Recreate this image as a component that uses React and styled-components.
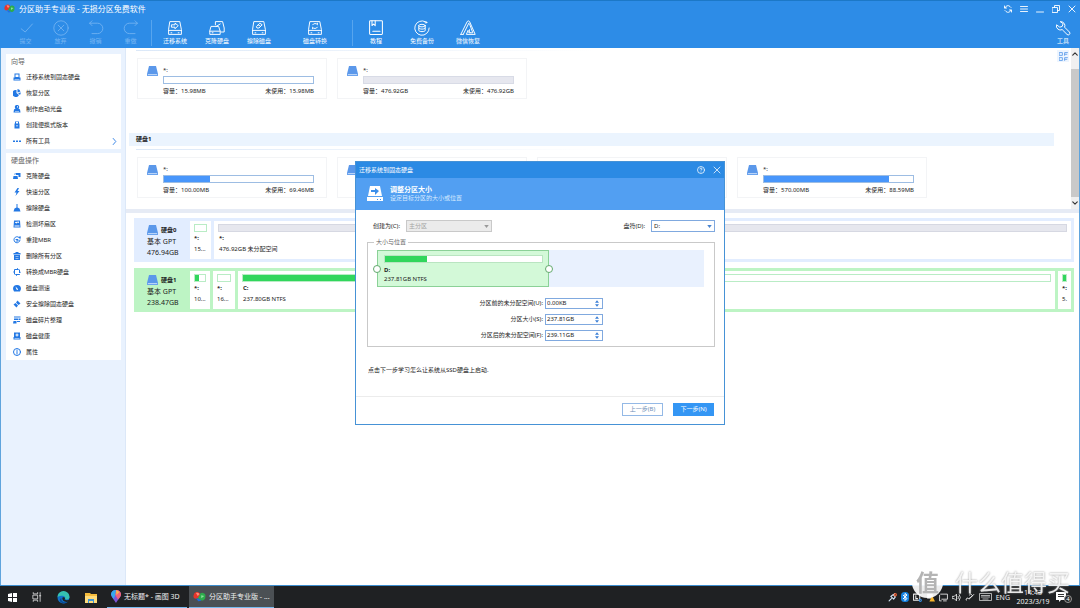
import React from 'react';
import styled, { createGlobalStyle } from 'styled-components';

const GlobalStyle = createGlobalStyle`
  *, *::before, *::after { box-sizing: border-box; }
  body {
    margin: 0;
    background: #fff;
    color: #1c1c1c;
    font-family: "Noto Sans", "Noto Sans CJK SC", sans-serif;
    font-size: 6px;
    line-height: 9px;
  }
  button, input, select { font: inherit; color: inherit; }
  button { border: 0; padding: 0; background: none; }
  svg { display: block; flex: none; }
  h1, h2, h3, p, ul, dl, dd, dt { margin: 0; padding: 0; font: inherit; list-style: none; }
`;

/* ---------- icons ---------- */

const Line = ({ s = 16, v = 16, w = 1, children }) => (
  <svg width={s} height={s} viewBox={`0 0 ${v} ${v}`} fill="none" stroke="currentColor"
    strokeWidth={w} strokeLinecap="round" strokeLinejoin="round" aria-hidden="true">{children}</svg>
);
const Solid = ({ children }) => (
  <svg width="8" height="8" viewBox="0 0 16 16" fill="currentColor" aria-hidden="true">{children}</svg>
);

const DriveIcon = () => (
  <svg width="11" height="10" viewBox="0 0 11 10" aria-hidden="true">
    <path d="M2 0h7l2 8H0z" fill="#5b98ea" />
    <path d="M0 8h11v2H0z" fill="#6ba3ee" />
    <path d="M1 8h9v1H1z" fill="#b9d4f8" />
  </svg>
);

const LogoIcon = ({ s = 11 }) => (
  <svg width={s} height={s} viewBox="0 0 22 20" aria-hidden="true">
    <path d="M1 8a6 6 0 0 1 11-3l3 4-6 4-5 1a5 5 0 0 1-3-6z" fill="#e5352b" />
    <path d="M5 4a5 5 0 0 1 6 2L8 9z" fill="#ff8d7a" />
    <path d="M11 8a5 5 0 0 1 10 2 6 6 0 0 1-9 6l-4-3z" fill="#2dac4c" />
    <path d="M14 8l5 1-5 4z" fill="#8be39a" />
    <path d="M5 13l5 1 4 3-5 1z" fill="#1f6ee0" />
  </svg>
);

const diskBody = <><path d="M4 2h12l2 10v6H2v-6z" /><path d="M2 13h16M5 16h1M14 16h1" /></>;

const tools = {
  commit: <Line v={20}><path d="M4 11l5 4L18 5" /></Line>,
  discard: <Line v={20}><circle cx="10" cy="10" r="9" /><path d="M6.500 6.500l7 7M13.500 6.500l-7 7" /></Line>,
  undo: <Line v={20}><path d="M5 1L2 4l3 3M2 4h10a6 6 0 0 1 0 13H5" /></Line>,
  redo: <Line v={20}><path d="M15 1l3 3-3 3M18 4H8a6 6 0 0 0 0 13h7" /></Line>,
  migrate: <Line v={20} w={1.2}>{diskBody}<path d="M6 6h4V4l4 3-4 4V9H6z" /></Line>,
  clone: <Line v={20} w={1.2}><path d="M8 6V2h9l2 8v5h-4M3 8h9l2 6v4H1v-4zM1 14h13M4 16h1M9 8l5-3" /></Line>,
  wipe: <Line v={20} w={1.2}>{diskBody}<path d="M7 8l4-4 3 2-4 4H8zM9 6l3 2" /></Line>,
  convert: <Line v={20} w={1.2}>{diskBody}<path d="M7 6a3.500 3.500 0 0 1 6 0v-2M13 9a3.500 3.500 0 0 1-6 0v2" /></Line>,
  tutorial: <Line v={20} w={1.3}><rect x="2" y="1" width="16" height="17" rx="1" /><path d="M5 1v6l2-2 2 2V1M6 14h9" /></Line>,
  backup: <Line v={20} w={1.2}><path d="M14 2a9 9 0 1 0 5 8" /><circle cx="15" cy="3" r="1" /><ellipse cx="10" cy="7" rx="4" ry="1.600" /><path d="M6 7v6c0 2 8 2 8 0V7M6 10c0 2 8 2 8 0" /></Line>,
  wechat: <Line v={20} w={1.2}><path d="M1 18L9 2q1-2 3 0l7 16H8l2-5 3 3M4 18l7-14M12 5l4 11h-5l1-4M1 18h3" /></Line>,
  wrench: <Line v={20} w={1.2}><path d="M7 2a5 5 0 0 1 5 7l6 6a2 2 0 0 1-3 3l-6-6a5 5 0 0 1-7-6l4 3 3-1 1-3z" /></Line>,
};

const sideIcons = {
  migrate: <Solid><path fillRule="evenodd" d="M3 1h10v8h2v6H1V9h2zm2 2v5h6V3zM3 12h10v1H3z" /></Solid>,
  recover: <Solid><path d="M7 2v6l5 4A7 7 0 1 1 7 2zM9 0a7 7 0 0 1 6 5l-6 2zM10 8l6-1-2 5z" /></Solid>,
  boot: <Solid><path fillRule="evenodd" d="M8 0a4 4 0 0 1 3 7l3 2 1 6H1l1-6 3-2a4 4 0 0 1 3-7zm0 2v3h2V3zM4 12v1h8v-1z" /></Solid>,
  portable: <Solid><path fillRule="evenodd" d="M4 1h8v4h1v10H3V5h1zm2 1v3h4V2zm1 6v3h2V8z" /></Solid>,
  more: <Solid><path d="M0 7h4v3H0zM6 7h4v3H6zM12 7h4v3h-4z" /></Solid>,
  clone: <Solid><path d="M6 2h9v8h-4V6H6zM1 8h8l1 6H0zM7 3l-4 3v-3z" /></Solid>,
  quick: <Solid><path d="M9 0L3 9h4l-2 7 8-10H9l3-6z" /></Solid>,
  wipe: <Solid><path d="M7 0h2v7l4 2 2 6H1l2-6 4-2z" /></Solid>,
  scan: <Solid><path fillRule="evenodd" d="M2 1h12l1 14H1zm2 3v1l3 2 2-2 3 1V3zM3 11v2h10v-2z" /></Solid>,
  rebuild: <Line s={8} w={2}><path d="M14 8a6 6 0 1 1-2-5h2M14 1v4M6 7h4v3H7" /></Line>,
  remove: <Solid><path fillRule="evenodd" d="M5 0h6v2h4v3H1V2h4zM2 6h12v10H2zm3 3v1h6V9zM5 12v1h6v-1z" /></Solid>,
  change: <Line s={8} w={2}><path d="M3 6V3h8l-2-2M13 4v6l2-2M13 13H5l2 2M3 12V6L1 8" /></Line>,
  speed: <Solid><path fillRule="evenodd" d="M8 2a8 8 0 0 1 8 8l-2 5H2l-2-5a8 8 0 0 1 8-8zM5 5l2 6 3 1 0-2z" /></Solid>,
  secure: <Solid><path d="M9 1l6 6-4 3-5-5zM5 6l5 5-3 4-6-6z" /></Solid>,
  defrag: <Solid><path d="M2 1h13v2H2zM2 5h8v3H2zM11 5h4v3h-4zM1 10h6v5H0zM8 10h6v2H8z" /></Solid>,
  health: <Solid><path fillRule="evenodd" d="M2 1h12v9h1v5H1v-5h1zm5 2v2H5v2h2v2h2V7h2V5H9V3zM3 12v1h10v-1z" /></Solid>,
  info: <Line s={8} w={2}><circle cx="8" cy="8" r="7" /><path d="M8 7v5M8 4v1" /></Line>,
};

/* ---------- window frame ---------- */

const Desktop = styled.div`
  min-height: 100vh;
  display: flex;
  flex-direction: column;
`;
const Window = styled.div`
  flex: 1;
  display: flex;
  flex-direction: column;
  border-bottom: 1px solid #3d8ecf;
`;
const Header = styled.header`
  background: #2d8ce7;
  border-top: 1px solid #1c78c7;
  color: #fff;
`;
const TitleBar = styled.div`
  display: flex;
  align-items: center;
  height: 15px;
  padding: 0 4px;
  gap: 4px;
`;
const AppTitle = styled.h1`
  flex: 1;
  font-size: 8px;
  line-height: 14px;
`;
const WindowControls = styled.div`
  display: flex;
  gap: 8px;
`;
const IconButton = styled.button`
  display: grid;
  place-items: center;
  width: 8px;
  height: 12px;
  color: inherit;
`;
const Toolbar = styled.nav`
  display: flex;
  align-items: center;
  height: 32px;
  padding-top: 2px;
`;
const ToolGroup = styled.div`
  display: flex;
  padding: 0 ${p => p.$end}px 0 ${p => p.$start}px;
  border-right: ${p => (p.$last ? 0 : 1)}px solid #57a5ee;
  margin-right: ${p => (p.$last ? 'auto' : 0)};
`;
const ToolButton = styled.button`
  display: flex;
  flex-direction: column;
  align-items: center;
  gap: 1px;
  width: ${p => p.$w}px;
  margin-left: ${p => (p.$apart ? 14 : 0)}px;
  color: ${p => (p.disabled ? '#79b6f2' : '#fff')};
  white-space: nowrap;
`;
const Body = styled.div`
  flex: 1;
  display: flex;
  border: solid #5fa4dd;
  border-width: 0 1px;
`;

/* ---------- sidebar ---------- */

const Sidebar = styled.aside`
  width: 125px;
  padding: 6px 4px 6px 5px;
  display: flex;
  flex-direction: column;
  gap: 4px;
  background: #e9f2fe;
  border-right: 1px solid #dce8f8;
`;
const SidePanel = styled.section`background: #fff;`;
const SideHeading = styled.h2`
  padding-left: 5px;
  color: #666;
  font-size: 7px;
  line-height: 15px;
`;
const SideItem = styled.button`
  display: flex;
  align-items: center;
  width: 100%;
  height: 16px;
  padding: 0 3px 0 7px;
  gap: 5px;
  color: #2378e4;
`;
const SideLabel = styled.span`
  flex: 1;
  text-align: left;
  color: #1c1c1c;
`;

/* ---------- partition cards ---------- */

const Main = styled.main`
  flex: 1;
  min-width: 0;
`;
const UpperPane = styled.div`
  display: flex;
  border-bottom: 4px solid #e6ebf5;
`;
const CardArea = styled.div`
  flex: 1;
  padding: 0 17px 11px 3px;
`;
const DiskBand = styled.h2`
  margin: 34px 0 3px;
  padding-left: 7px;
  background: #ebf4fe;
  font-weight: 700;
  line-height: 13px;
`;
const Rule = styled.div`
  height: 1px;
  margin: ${p => (p.$first ? 2 : 0)}px 0 7px 7px;
  background: linear-gradient(90deg, #dbe8f8, #fff 50%);
`;
const CardGrid = styled.div`
  display: grid;
  grid-template-columns: repeat(auto-fill, 190px);
  gap: 10px;
  padding-left: 8px;
`;
const Card = styled.article`
  display: flex;
  gap: 5px;
  padding: 7px 12px 2px 9px;
  border: 1px solid #f3f4f6;
`;
const CardContent = styled.div`flex: 1;`;
const Meter = styled.div`
  height: 8px;
  margin: 1px 0 3px;
  border: 1px solid ${p => (p.$free ? '#d8dbe6' : '#9dbde3')};
  background: ${p => (p.$free ? '#e6e7ef' : '#fff')};
`;
const Fill = styled.div`
  height: 100%;
  background: ${p => p.$color};
`;
const Stats = styled.div`
  display: flex;
  justify-content: space-between;
`;
const ViewSwitch = styled.button`
  display: grid;
  place-items: center;
  width: 12px;
  height: 12px;
  margin: 2px 2px 0 -14px;
  background: #edf5ff;
  color: #5b9bea;
`;
const ScrollBar = styled.div`
  display: flex;
  flex-direction: column;
  width: 8px;
  background: #f0f0f0;
  color: #333;
`;
const Thumb = styled.div`
  flex: 1;
  margin-top: 9px;
  background: #c9c9c9;
`;

/* ---------- disk map ---------- */

const DiskMap = styled.div`
  display: flex;
  flex-direction: column;
  gap: 6px;
  padding: 5px 5px 5px 8px;
`;
const DiskRow = styled.section`
  display: flex;
  gap: 3px;
  padding: 3px;
  background: ${p => (p.$active ? '#bdf4c4' : '#e2edff')};
`;
const DiskInfo = styled.div`
  width: 50px;
  padding: 3px 0 0 10px;
  font-size: 7px;
  line-height: 11px;
  white-space: nowrap;
`;
const DiskName = styled.h3`
  display: flex;
  align-items: center;
  gap: 3px;
  height: 12px;
  font-size: 6px;
  font-weight: 700;
`;
const Block = styled.div`
  flex: ${p => (p.$w ? `0 0 ${p.$w}px` : 1)};
  min-width: 0;
  padding: 3px 3px 4px;
  overflow: hidden;
  background: #fff;
  line-height: 11px;
  white-space: nowrap;
`;
const MapBar = styled.div`
  height: 8px;
  margin: 0 1px 1px;
  border: 1px solid ${p => (p.$free ? '#d6d8e2' : '#b9ecc5')};
  background: ${p => (p.$free ? '#e6e7ee' : '#fff')};
`;
const BlockText = styled.p`
  padding-left: ${p => (p.$tight ? 1 : 2)}px;
  font-weight: ${p => (p.$bold ? 700 : 400)};
`;

/* ---------- dialog ---------- */

const Overlay = styled.div`
  position: fixed;
  inset: 0 0 22px;
  display: grid;
  place-items: center;
`;
const Dialog = styled.section`
  width: 370px;
  border: 1px solid #4692d6;
  background: #fff;
`;
const DialogTitle = styled.header`
  display: flex;
  align-items: center;
  gap: 8px;
  height: 16px;
  padding: 0 3px;
  background: #2b8ae4;
  color: #fff;
`;
const DialogName = styled.h2`flex: 1;`;
const Banner = styled.div`
  display: flex;
  align-items: center;
  gap: 7px;
  height: 32px;
  padding-left: 11px;
  background: #529ff2;
  color: #d9ebff;
`;
const BannerTitle = styled.h3`
  color: #fff;
  font-size: 7px;
  font-weight: 700;
`;
const DialogBody = styled.div`padding: 10px 9px 21px 11px;`;
const FieldRow = styled.div`
  display: flex;
  justify-content: space-between;
  padding-left: 6px;
`;
const Field = styled.div`
  display: flex;
  align-items: center;
  gap: 6px;
`;
const SelectBox = styled.div`
  display: grid;
  align-items: center;
  width: ${p => p.$w}px;
  height: 12px;
  border: 1px solid ${p => (p.$off ? '#c9c9c9' : '#80a9df')};
  background: ${p => (p.$off ? '#ebebeb' : '#fff')};
  color: ${p => (p.$off ? '#999' : '#4a84cf')};
  & > * { grid-area: 1 / 1; }
  & > svg { justify-self: end; margin-right: 2px; }
`;
const Select = styled.select`
  width: 100%;
  height: 10px;
  padding: 0 2px;
  border: 0;
  appearance: none;
  background: transparent;
  color: ${p => (p.disabled ? '#a3a3a3' : '#222')};
  opacity: 1;
`;
const SizeBox = styled.fieldset`
  margin: 6px 0 0;
  padding: 3px 10px 5px 9px;
  border: 1px solid #c9c9c9;
  & > legend { padding: 0 2px; margin-left: -3px; color: #666; }
`;
const Allocation = styled.div`
  display: flex;
  height: 37px;
  background: #e9f1fe;
`;
const Partition = styled.div`
  position: relative;
  width: 172px;
  padding: 4px 5px 0 6px;
  border: 1px solid #8bd197;
  background: #d3f9d8;
`;
const PartitionBar = styled.div`
  height: 8px;
  margin-bottom: 3px;
  border: 1px solid #b9e5c1;
  background: #fff;
`;
const Handle = styled.span`
  position: absolute;
  top: 14px;
  ${p => p.$side}: -5px;
  width: 8px;
  height: 8px;
  border: 1px solid #62a96d;
  border-radius: 50%;
  background: #fff;
`;
const SpinList = styled.div`
  display: grid;
  grid-template-columns: 166px 58px;
  gap: 5px 2px;
  margin-top: 11px;
  text-align: right;
  line-height: 11px;
`;
const SpinBox = styled.div`
  display: flex;
  height: 11px;
  border: 1px solid #80a9df;
`;
const SpinInput = styled.input`
  flex: 1;
  min-width: 0;
  padding: 0 1px;
  border: 0;
  background: none;
`;
const SpinArrows = styled.div`
  display: grid;
  grid-template-rows: 4px 4px;
  width: 10px;
  color: #3b7fd6;
`;
const SpinArrow = styled.button`
  display: grid;
  place-items: center;
  color: inherit;
`;
const PartitionName = styled.p`font-weight: 700;`;
const Hint = styled.p`
  margin-top: 19px;
  padding-left: 1px;
`;
const DialogFooter = styled.footer`
  display: flex;
  justify-content: flex-end;
  gap: 10px;
  padding: 6px 10px 8px;
  border-top: 1px solid #ececec;
`;
const ActionButton = styled.button`
  width: 41px;
  height: 13px;
  border: 1px solid ${p => (p.$primary ? '#3496f4' : '#94b9e6')};
  background: ${p => (p.$primary ? '#3496f4' : '#fff')};
  color: ${p => (p.$primary ? '#fff' : '#6f8fb8')};
`;

/* ---------- taskbar ---------- */

const Taskbar = styled.footer`
  display: flex;
  height: 22px;
  padding: 0 6px 0 8px;
  background: #1f2123;
  color: #f0f0f0;
`;
const Shortcuts = styled.div`
  display: flex;
  align-items: center;
  gap: 15px;
  width: 99px;
`;
const TaskApp = styled.button`
  display: flex;
  align-items: center;
  gap: 3px;
  width: ${p => (p.$active ? 85 : 80)}px;
  margin-right: 2px;
  padding-left: 4px;
  border-bottom: 1px solid #76b9ed;
  background: ${p => (p.$active ? '#4b5054' : 'transparent')};
  color: #f0f0f0;
  font-size: 7px;
  white-space: nowrap;
`;
const Tray = styled.div`
  display: flex;
  align-items: center;
  gap: 4px;
  margin-left: auto;
  font-size: 7px;
`;
const Clock = styled.time`
  width: 38px;
  text-align: center;
`;
const Notice = styled.button`
  position: relative;
  width: 18px;
  color: #fff;
`;
const Count = styled.span`
  position: absolute;
  left: 8px;
  top: 3px;
  width: 8px;
  height: 8px;
  border-radius: 50%;
  border: 1px solid #999;
  background: #222;
  font-size: 6px;
  line-height: 6px;
`;
const Watermark = styled.div`
  position: fixed;
  right: 10px;
  bottom: 10px;
  display: flex;
  align-items: center;
  gap: 12px;
  color: rgba(255, 255, 255, 0.85);
  font-size: 23px;
  line-height: 31px;
  text-shadow: 0 0 2px #8d8d8d;
  pointer-events: none;
`;
const Seal = styled.span`
  width: 31px;
  height: 31px;
  border-radius: 50%;
  background: rgba(255, 255, 255, 0.92);
  color: #b4b4b4;
  font-weight: 700;
  text-align: center;
  text-shadow: none;
`;

/* ---------- data ---------- */

const editTools = [['commit', '提交'], ['discard', '放弃'], ['undo', '撤销'], ['redo', '重做']];
const diskTools = [['migrate', '迁移系统'], ['clone', '克隆硬盘'], ['wipe', '擦除磁盘'], ['convert', '磁盘转换', true]];
const helpTools = [['tutorial', '教程'], ['backup', '免费备份'], ['wechat', '微信恢复']];

const wizards = [['migrate', '迁移系统到固态硬盘'], ['recover', '恢复分区'], ['boot', '制作启动光盘'],
  ['portable', '创建便携式版本'], ['more', '所有工具']];
const operations = [['clone', '克隆硬盘'], ['quick', '快速分区'], ['wipe', '擦除硬盘'], ['scan', '检测坏扇区'],
  ['rebuild', '重建MBR'], ['remove', '删除所有分区'], ['change', '转换成MBR硬盘'], ['speed', '磁盘测速'],
  ['secure', '安全擦除固态硬盘'], ['defrag', '磁盘碎片整理'], ['health', '磁盘健康'], ['info', '属性']];

const disk0 = [
  { id: 'reserved', size: '15.98MB', unused: '15.98MB', used: 0 },
  { id: 'free', size: '476.92GB', unused: '476.92GB', used: 0, free: true },
];
const disk1 = [
  { id: 'efi', size: '100.00MB', unused: '69.46MB', used: 31 },
  { id: 'msr', covered: true },
  { id: 'system', covered: true },
  { id: 'recovery', size: '570.00MB', unused: '88.59MB', used: 84 },
];

const spinFields = [
  ['before', '分区前的未分配空间(U):', '0.00KB'],
  ['size', '分区大小(S):', '237.81GB'],
  ['after', '分区后的未分配空间(F):', '239.11GB'],
];

/* ---------- parts ---------- */

const Triangle = ({ up, w = 5, h = 3 }) => (
  <svg width={w} height={h} viewBox="0 0 6 4" fill="currentColor" aria-hidden="true">
    <path d={up ? 'M0 4h6L3 0z' : 'M0 0h6L3 4z'} />
  </svg>
);

const Tools = ({ items, w, disabled }) => items.map(([icon, label, apart]) => (
  <ToolButton key={icon} $w={w} $apart={apart} disabled={disabled}>{tools[icon]}{label}</ToolButton>
));

const SideList = ({ title, items }) => (
  <SidePanel>
    <SideHeading>{title}</SideHeading>
    <ul>
      {items.map(([icon, label]) => (
        <li key={icon}>
          <SideItem>
            {sideIcons[icon]}
            <SideLabel>{label}</SideLabel>
            {icon === 'more' && <Line s={7} w={2}><path d="M5 1l6 7-6 7" /></Line>}
          </SideItem>
        </li>
      ))}
    </ul>
  </SidePanel>
);

const PartitionCard = ({ size, unused, used, free, covered }) => (
  <Card>
    <DriveIcon />
    {!covered && (
      <CardContent>
        <h3>*:</h3>
        <Meter $free={free}><Fill $color="#4896fb" style={{ width: `${used}%` }} /></Meter>
        <Stats><span>容量：{size}</span><span>未使用：{unused}</span></Stats>
      </CardContent>
    )}
  </Card>
);

const MapBlock = ({ w, name = '*:', text, used = 0, free }) => (
  <Block $w={w}>
    <MapBar $free={free}><Fill $color="#31d65c" style={{ width: `${used}%` }} /></MapBar>
    <BlockText $bold $tight={Boolean(w)}>{name}</BlockText>
    <BlockText $tight={Boolean(w)}>{text}</BlockText>
  </Block>
);

const DiskSummary = ({ name, size }) => (
  <DiskInfo>
    <DiskName><DriveIcon />{name}</DiskName>
    <p>基本 GPT</p>
    <p>{size}</p>
  </DiskInfo>
);

const ResizeDialog = () => (
  <Overlay>
    <Dialog role="dialog" aria-labelledby="dialog-name">
      <DialogTitle>
        <DialogName id="dialog-name">迁移系统到固态硬盘</DialogName>
        <IconButton aria-label="帮助"><Line s={8} w={1.5}><circle cx="8" cy="8" r="7" /><path d="M6 6q0-2 2-2t2 2-2 3M8 12v0" /></Line></IconButton>
        <IconButton aria-label="关闭"><Line s={8} w={1.5}><path d="M2 2l12 12M14 2L2 14" /></Line></IconButton>
      </DialogTitle>
      <Banner>
        <svg width="16" height="16" viewBox="0 0 16 16" aria-hidden="true">
          <path d="M3 0h10l2 10H1zM0 11h16v4H0z" fill="#fff" />
          <path d="M4 4h4V2l4 3-4 4V6H4z" fill="#3b8feb" />
          <path d="M10 13h1v1h-1zM13 13h1v1h-1z" fill="#3b8feb" />
        </svg>
        <div>
          <BannerTitle>调整分区大小</BannerTitle>
          <p>设定目标分区的大小或位置</p>
        </div>
      </Banner>
      <DialogBody>
        <FieldRow>
          <Field>
            <label htmlFor="kind">创建为(C):</label>
            <SelectBox $w={86} $off>
              <Select id="kind" disabled><option>主分区</option></Select>
              <Triangle />
            </SelectBox>
          </Field>
          <Field>
            <label htmlFor="letter">盘符(D):</label>
            <SelectBox $w={64}>
              <Select id="letter"><option>D:</option></Select>
              <Triangle />
            </SelectBox>
          </Field>
        </FieldRow>
        <SizeBox>
          <legend>大小与位置</legend>
          <Allocation>
            <Partition>
              <PartitionBar><Fill $color="#31d65c" style={{ width: '27%' }} /></PartitionBar>
              <PartitionName>D:</PartitionName>
              <p>237.81GB NTFS</p>
              <Handle $side="left" />
              <Handle $side="right" />
            </Partition>
          </Allocation>
          <SpinList>
            {spinFields.map(([id, label, value]) => (
              <React.Fragment key={id}>
                <label htmlFor={id}>{label}</label>
                <SpinBox>
                  <SpinInput id={id} defaultValue={value} />
                  <SpinArrows>
                    <SpinArrow aria-label="增加"><Triangle up w={4} h={3} /></SpinArrow>
                    <SpinArrow aria-label="减少"><Triangle w={4} h={3} /></SpinArrow>
                  </SpinArrows>
                </SpinBox>
              </React.Fragment>
            ))}
          </SpinList>
        </SizeBox>
        <Hint>点击下一步学习怎么让系统从SSD硬盘上启动.</Hint>
      </DialogBody>
      <DialogFooter>
        <ActionButton>上一步(B)</ActionButton>
        <ActionButton $primary>下一步(N)</ActionButton>
      </DialogFooter>
    </Dialog>
  </Overlay>
);

const SystemTaskbar = () => (
  <Taskbar>
    <Shortcuts>
      <svg width="9" height="9" viewBox="0 0 9 9" fill="#fff" aria-hidden="true"><path d="M0 1l4-1v4H0zM5 0l4-0v4H5zM0 5h4v4L0 8zM5 5h4v4H5z" /></svg>
      <Line s={10} w={1.2}><path d="M2 1v2h7V1M2 15v-2h7v2M2 5h7v6H2zM13 1v14M12 6h2" /></Line>
      <svg width="13" height="13" viewBox="0 0 26 26" aria-hidden="true">
        <circle cx="13" cy="13" r="12" fill="#1272c9" />
        <path d="M1 12A12 12 0 0 1 25 12c0 5-6 6-9 4 3-5-6-9-15-4z" fill="#35c1b1" />
        <path d="M9 14c-2 6 5 11 13 7-4 5-13 5-16-1-1-3 0-5 3-6z" fill="#0c4a93" />
        <path d="M11 13c5-2 6 2 4 4 3 2 7 2 10 0v3c-6 4-16 1-14-7z" fill="#1f2123" />
      </svg>
      <svg width="12" height="11" viewBox="0 0 12 11" aria-hidden="true">
        <path d="M0 1h5l1 1h6v9H0z" fill="#f5bc3c" /><path d="M0 4h12v7H0z" fill="#ffdc7c" /><path d="M3 7h6v4H8V9H4v2H3z" fill="#3d95d8" />
      </svg>
    </Shortcuts>
    <TaskApp>
      <svg width="10" height="13" viewBox="0 0 20 26" aria-hidden="true">
        <path d="M10 0C4 0 0 4 0 9s7 11 10 17c3-6 10-12 10-17S16 0 10 0z" fill="#7d55d8" />
        <path d="M10 0c6 0 10 4 10 9 0 3-3 7-6 10L8 9z" fill="#f2647b" />
        <path d="M0 9c0-5 4-9 10-9L8 12l-3 6z" fill="#35a9ed" />
        <path d="M10 0l7 4-6 6z" fill="#f8b74d" />
      </svg>
      无标题* - 画图 3D
    </TaskApp>
    <TaskApp $active><LogoIcon s={13} />分区助手专业版 - ...</TaskApp>
    <Tray>
      <Line s={9} w={2}><path d="M2 14l4-4M5 6l5 5 3-4-4-4zM10 3l2-2" stroke="#d5e6f6" /><circle cx="13" cy="3" r="2" stroke="#ec6237" /></Line>
      <svg width="8" height="10" viewBox="0 0 16 20" aria-hidden="true"><rect width="16" height="20" rx="7" fill="#1683e2" /><path d="M4 6l8 7-4 4V3l4 3-8 8" fill="none" stroke="#fff" strokeWidth="2" /></svg>
      <Line s={9} w={1.8}><path d="M1 2h11v11H1zM5 5v5h3" /><circle cx="13" cy="13" r="2" stroke="#3590e8" /></Line>
      <svg width="9" height="9" viewBox="0 0 16 16" aria-hidden="true"><path d="M2 1h10v9H2z" fill="#ddd" /><path d="M11 5l5 10H6z" fill="#f9b62c" /></svg>
      <Line s={9} w={1.5}><path d="M3 2h12v9H5M1 4v10h3M8 14h5" /></Line>
      <Line s={9} w={1.5}><path d="M1 6h3l4-4v12l-4-4H1zM11 6q1 2 0 4M13 3q4 5 0 10" /></Line>
      <Line s={10} w={1.5}><path d="M2 13a2 2 0 0 1 4-2l3-3M7 5l2-2 3 3-5 5M10 8l4-4" /></Line>
      <svg width="13" height="8" viewBox="0 0 26 16" fill="none" stroke="#ddd" strokeWidth="1.5" aria-hidden="true"><path d="M1 1h24v14H1zM4 5h18M4 8h18M7 12h12" /></svg>
      <span>ENG</span>
      <Clock>14:43<br />2023/3/19</Clock>
      <Notice aria-label="通知"><svg width="10" height="10" viewBox="0 0 10 10" aria-hidden="true"><path d="M0 0h10v8H5L3 10V8H0z" fill="#fff" /><path d="M2 2h6v1H2zM2 4h6v1H2z" fill="#333" /></svg><Count>4</Count></Notice>
    </Tray>
  </Taskbar>
);

export default function App() {
  return (
    <Desktop>
      <GlobalStyle />
      <Window>
        <Header>
          <TitleBar>
            <LogoIcon />
            <AppTitle>分区助手专业版 - 无损分区免费软件</AppTitle>
            <WindowControls>
              <IconButton aria-label="刷新"><Line s={8} w={1.8}><path d="M2 6a6 6 0 0 1 10-3l2 2M14 10a6 6 0 0 1-10 3l-2-2M1 2v4h4M15 14v-4h-4" /></Line></IconButton>
              <IconButton aria-label="菜单"><Line s={8} w={1.8}><path d="M1 3h14M1 8h14M1 13h14" /></Line></IconButton>
              <IconButton aria-label="最小化"><Line s={8} w={1.8}><path d="M1 14h14" /></Line></IconButton>
              <IconButton aria-label="还原"><Line s={8} w={1.8}><path d="M1 5h10v10H1zM5 5V1h10v10h-4" /></Line></IconButton>
              <IconButton aria-label="关闭"><Line s={8} w={1.8}><path d="M2 2l12 12M14 2L2 14" /></Line></IconButton>
            </WindowControls>
          </TitleBar>
          <Toolbar>
            <ToolGroup $start={8} $end={3}><Tools items={editTools} w={35} disabled /></ToolGroup>
            <ToolGroup $start={2} $end={16}><Tools items={diskTools} w={42} /></ToolGroup>
            <ToolGroup $start={0} $end={0} $last><Tools items={helpTools} w={46} /></ToolGroup>
            <Tools items={[['wrench', '工具']]} w={34} />
          </Toolbar>
        </Header>
        <Body>
          <Sidebar>
            <SideList title="向导" items={wizards} />
            <SideList title="硬盘操作" items={operations} />
          </Sidebar>
          <Main>
            <UpperPane>
              <CardArea>
                <Rule $first />
                <CardGrid>{disk0.map(d => <PartitionCard key={d.id} {...d} />)}</CardGrid>
                <DiskBand>硬盘1</DiskBand>
                <Rule />
                <CardGrid>{disk1.map(d => <PartitionCard key={d.id} {...d} />)}</CardGrid>
              </CardArea>
              <ViewSwitch aria-label="切换视图"><Line s={9} w={1.5}><path d="M1 1h5v5H1zM1 10h5v5H1zM10 6V1h5M10 4h4M10 15v-5h5M10 13h4" /></Line></ViewSwitch>
              <ScrollBar>
                <IconButton aria-label="向上"><Line s={6} w={3}><path d="M2 11l6-6 6 6" /></Line></IconButton>
                <Thumb />
                <IconButton aria-label="向下"><Line s={6} w={3}><path d="M2 5l6 6 6-6" /></Line></IconButton>
              </ScrollBar>
            </UpperPane>
            <DiskMap>
              <DiskRow>
                <DiskSummary name="硬盘0" size="476.94GB" />
                <MapBlock w={21} text="15..." />
                <MapBlock text="476.92GB 未分配空间" free />
              </DiskRow>
              <DiskRow $active>
                <DiskSummary name="硬盘1" size="238.47GB" />
                <MapBlock w={20} text="10..." used={40} />
                <MapBlock w={22} text="16..." />
                <MapBlock name="C:" text="237.80GB NTFS" used={37} />
                <MapBlock w={13} text="5." used={100} />
              </DiskRow>
            </DiskMap>
          </Main>
        </Body>
      </Window>
      <SystemTaskbar />
      <ResizeDialog />
      <Watermark><Seal>值</Seal>什么值得买</Watermark>
    </Desktop>
  );
}
